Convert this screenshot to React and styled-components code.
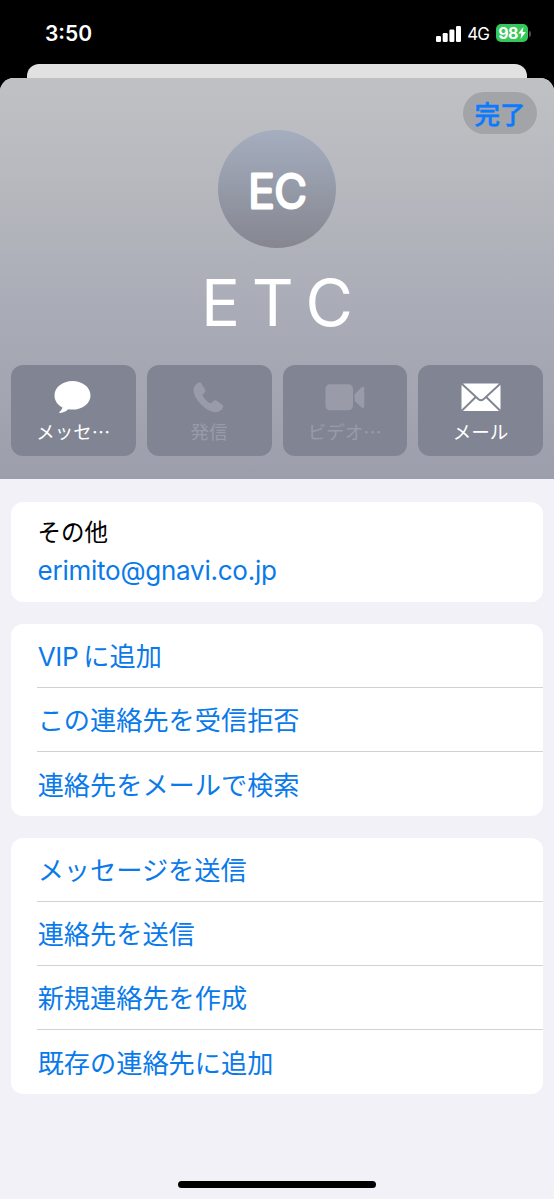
import React from 'react';
import styled, { createGlobalStyle } from 'styled-components';

const GlobalStyle = createGlobalStyle`
  * {
    box-sizing: border-box;
  }
  body {
    margin: 0;
    background: #000;
    font-family: Inter, 'Noto Sans CJK JP', sans-serif;
  }
`;

const Screen = styled.div`
  display: flex;
  flex-direction: column;
  width: 554px;
  height: 1199px;
  overflow: hidden;
  background: #000;
`;

const StatusBar = styled.div`
  display: flex;
  justify-content: space-between;
  align-items: center;
  height: 64px;
  flex: none;
  padding: 3px 23px 0 45px;
  color: #fff;
`;
const Time = styled.div`
  font-size: 21px;
  font-weight: 600;
  line-height: 24px;
`;
const StatusRight = styled.div`
  display: flex;
  align-items: center;
`;
const Network = styled.div`
  margin: 0 7px 0 6px;
  font-size: 17px;
  line-height: 20px;
  letter-spacing: -1px;
`;
const Battery = styled.div`
  display: flex;
  align-items: center;
  justify-content: center;
  width: 32px;
  height: 18px;
  margin-top: -1px;
  border-radius: 5px;
  background: #35c759;
  font-size: 16px;
  font-weight: 700;
  letter-spacing: -0.6px;
`;
const BatteryTip = styled.div`
  width: 2px;
  height: 6px;
  margin-left: 1px;
  border-radius: 0 2px 2px 0;
  background: #4b4b4d;
`;

const BackSheet = styled.div`
  flex: none;
  height: 14px;
  margin: 0 27px;
  border-radius: 12px 12px 0 0;
  background: #e1e1e1;
`;
const Sheet = styled.div`
  display: flex;
  flex-direction: column;
  flex: 1;
  overflow: hidden;
  border-radius: 14px 14px 0 0;
  background: #f2f1f7;
`;

const Header = styled.div`
  display: flex;
  flex-direction: column;
  align-items: center;
  flex: none;
  height: 401px;
  padding: 14px 11px 0;
  background: linear-gradient(#c0c1c5 0%, #b9babf 22%, #a9acb7 58%, #9d9eab 100%);
`;
const DoneButton = styled.button`
  align-self: flex-end;
  width: 74px;
  height: 42px;
  margin-right: 6px;
  padding: 0 0 1px;
  border: none;
  border-radius: 21px;
  background: #a3a4a8;
  color: #0a7aff;
  font-family: 'Noto Sans CJK JP', sans-serif;
  font-size: 25.5px;
  font-weight: 500;
  line-height: 40px;
  -webkit-text-stroke: 0.5px #0a7aff;
`;
const Avatar = styled.div`
  width: 118px;
  height: 118px;
  margin-top: -4px;
  border-radius: 50%;
  background: linear-gradient(#a5aebf, #858690);
`;
const Name = styled.h1`
  margin: 22px 0 0;
  color: #fff;
  font-size: 65px;
  font-weight: 400;
  line-height: 66px;
  word-spacing: -6.5px;
`;
const Actions = styled.div`
  display: grid;
  grid-template-columns: repeat(4, 1fr);
  gap: 11px;
  width: 100%;
  margin-top: 29px;
`;
const Action = styled.button`
  display: flex;
  flex-direction: column;
  align-items: center;
  height: 91px;
  padding: 13px 0 0;
  border: none;
  border-radius: 12px;
  background: #818492;
  color: ${(props) => (props.disabled ? '#999ba8' : '#fff')};
`;
const ActionLabel = styled.span`
  margin-top: 2px;
  font-family: 'Noto Sans CJK JP', sans-serif;
  font-size: 18.5px;
  line-height: 26px;
`;

const Content = styled.div`
  display: flex;
  flex-direction: column;
  gap: 22px;
  padding: 23px 11px 0;
`;
const Card = styled.div`
  border-radius: 12px;
  background: #fff;
`;
const EmailCard = styled(Card)`
  height: 100px;
  padding: 13px 27px 0 26.6px;
`;
const EmailLabel = styled.div`
  font-size: 23.5px;
  line-height: 36px;
`;
const Email = styled.div`
  color: #0a7aea;
  font-size: 26px;
  line-height: 40px;
  letter-spacing: -0.25px;
`;
const Row = styled.div`
  display: flex;
  align-items: center;
  height: 64px;
  margin-left: 26px;
  padding: 3px 0 0 0.7px;
  color: #0a7aea;
  font-size: 26.2px;
  line-height: 40px;

  &:not(:last-child) {
    border-bottom: 1px solid #d2d2d5;
  }
`;
const Latin = styled.span`
  margin-right: 5px;
  letter-spacing: -0.4px;
`;

const HomeBar = styled.div`
  flex: none;
  width: 198px;
  height: 7px;
  margin: auto auto 11px;
  border-radius: 4px;
  background: #000;
`;

const SignalIcon = () => (
  <svg width="25" height="16" viewBox="0 0 25 16" fill="#fff">
    <rect x="0" y="10" width="5" height="6" rx="1.3" />
    <rect x="6.7" y="7" width="5" height="9" rx="1.3" />
    <rect x="13.4" y="3.5" width="5" height="12.5" rx="1.3" />
    <rect x="20" y="0" width="5" height="16" rx="1.3" />
  </svg>
);

const BoltIcon = () => (
  <svg width="8" height="12" viewBox="0 0 8 12" fill="#fff">
    <path d="M5.4 0 0.2 6.6h3.2L2.5 12 7.8 5.1H4.6z" />
  </svg>
);

const MessageIcon = () => (
  <svg width="40" height="38" viewBox="0 0 40 38" fill="currentColor">
    <path d="M19.500 3C9.500 3 1.500 9.400 1.500 17.500c0 5 3 9.500 8 12-.6 1.800-1.700 3.200-2.900 4.300-.6.700-.2 1.400.7 1.300 3.200-.5 5.700-1.900 7.900-3.900 1.400.3 2.800.4 4.300.4 10 0 18-6.300 18-14.200S29.500 3 19.500 3z" />
  </svg>
);

const PhoneIcon = () => (
  <svg width="40" height="38" viewBox="0 0 40 38" fill="currentColor">
    <path d="M9.300 4.700c-2.400 1.400-4.800 3.800-4.700 7.600.1 4.600 3.500 10.300 7.700 14.500 4.300 4.300 9.700 7.400 14.600 7.400 3.400 0 5.800-2.100 7-4.400.6-1.200.2-2.400-.9-3.300l-5-3.500c-1.500-1-2.700-.8-3.800.3l-1.500 1.500c-.6.6-1.300.6-2 .2-2.500-1.500-5.300-4.300-6.800-6.800-.4-.7-.4-1.400.2-2l1.400-1.500c1.100-1.200 1.200-2.400.3-3.800l-3.400-5.400c-.8-1.200-1.900-1.500-3.100-.8z" />
  </svg>
);

const VideoIcon = () => (
  <svg width="40" height="38" viewBox="0 0 40 38" fill="currentColor">
    <rect x="0.500" y="6.300" width="27.500" height="26" rx="4.500" />
    <path d="M29.700 16.200l6.600-6.600c1.300-1.300 3-.9 3 .8v18c0 1.600-1.700 2-3 .8l-6.600-6.300z" />
  </svg>
);

const MailIcon = () => (
  <svg width="40" height="38" viewBox="0 0 40 38" fill="currentColor">
    <rect x="0.500" y="5.500" width="39" height="27.500" rx="2.500" />
    <path
      d="M1 6l16.500 15.200q2.500 2.200 5 0L39 6M1 32.500l13.800-13.500M39 32.500L25.200 19"
      fill="none"
      stroke="#818492"
      strokeWidth="1.900"
    />
  </svg>
);

const actions = [
  { label: 'メッセ…', icon: <MessageIcon /> },
  { label: '発信', icon: <PhoneIcon />, disabled: true },
  { label: 'ビデオ…', icon: <VideoIcon />, disabled: true },
  { label: 'メール', icon: <MailIcon /> },
];

const mailRows = [
  { latin: 'VIP', text: 'に追加' },
  { text: 'この連絡先を受信拒否' },
  { text: '連絡先をメールで検索' },
];

const contactRows = [
  { text: 'メッセージを送信' },
  { text: '連絡先を送信' },
  { text: '新規連絡先を作成' },
  { text: '既存の連絡先に追加' },
];

function RowCard({ rows }) {
  return (
    <Card>
      {rows.map((row) => (
        <Row key={row.text}>
          {row.latin && <Latin>{row.latin}</Latin>}
          {row.text}
        </Row>
      ))}
    </Card>
  );
}

export default function App() {
  return (
    <Screen lang="ja">
      <GlobalStyle />
      <StatusBar>
        <Time>3:50</Time>
        <StatusRight>
          <SignalIcon />
          <Network>4G</Network>
          <Battery>
            98
            <BoltIcon />
          </Battery>
          <BatteryTip />
        </StatusRight>
      </StatusBar>
      <BackSheet />
      <Sheet>
        <Header>
          <DoneButton>完了</DoneButton>
          <Avatar>
            {/* thin letters with a round stroke give rounded initials */}
            <svg width="118" height="118" viewBox="0 0 118 118">
              <text
                x="59.500"
                y="77.800"
                textAnchor="middle"
                textLength="58.500"
                lengthAdjust="spacingAndGlyphs"
                fontFamily="Inter, sans-serif"
                fontSize="47"
                fontWeight="300"
                fill="#fff"
                stroke="#fff"
                strokeWidth="3.200"
                strokeLinejoin="round"
              >
                EC
              </text>
            </svg>
          </Avatar>
          <Name>E T C</Name>
          <Actions>
            {actions.map((action) => (
              <Action key={action.label} disabled={action.disabled}>
                {action.icon}
                <ActionLabel>{action.label}</ActionLabel>
              </Action>
            ))}
          </Actions>
        </Header>
        <Content>
          <EmailCard>
            <EmailLabel>その他</EmailLabel>
            <Email>erimito@gnavi.co.jp</Email>
          </EmailCard>
          <RowCard rows={mailRows} />
          <RowCard rows={contactRows} />
        </Content>
        <HomeBar />
      </Sheet>
    </Screen>
  );
}
